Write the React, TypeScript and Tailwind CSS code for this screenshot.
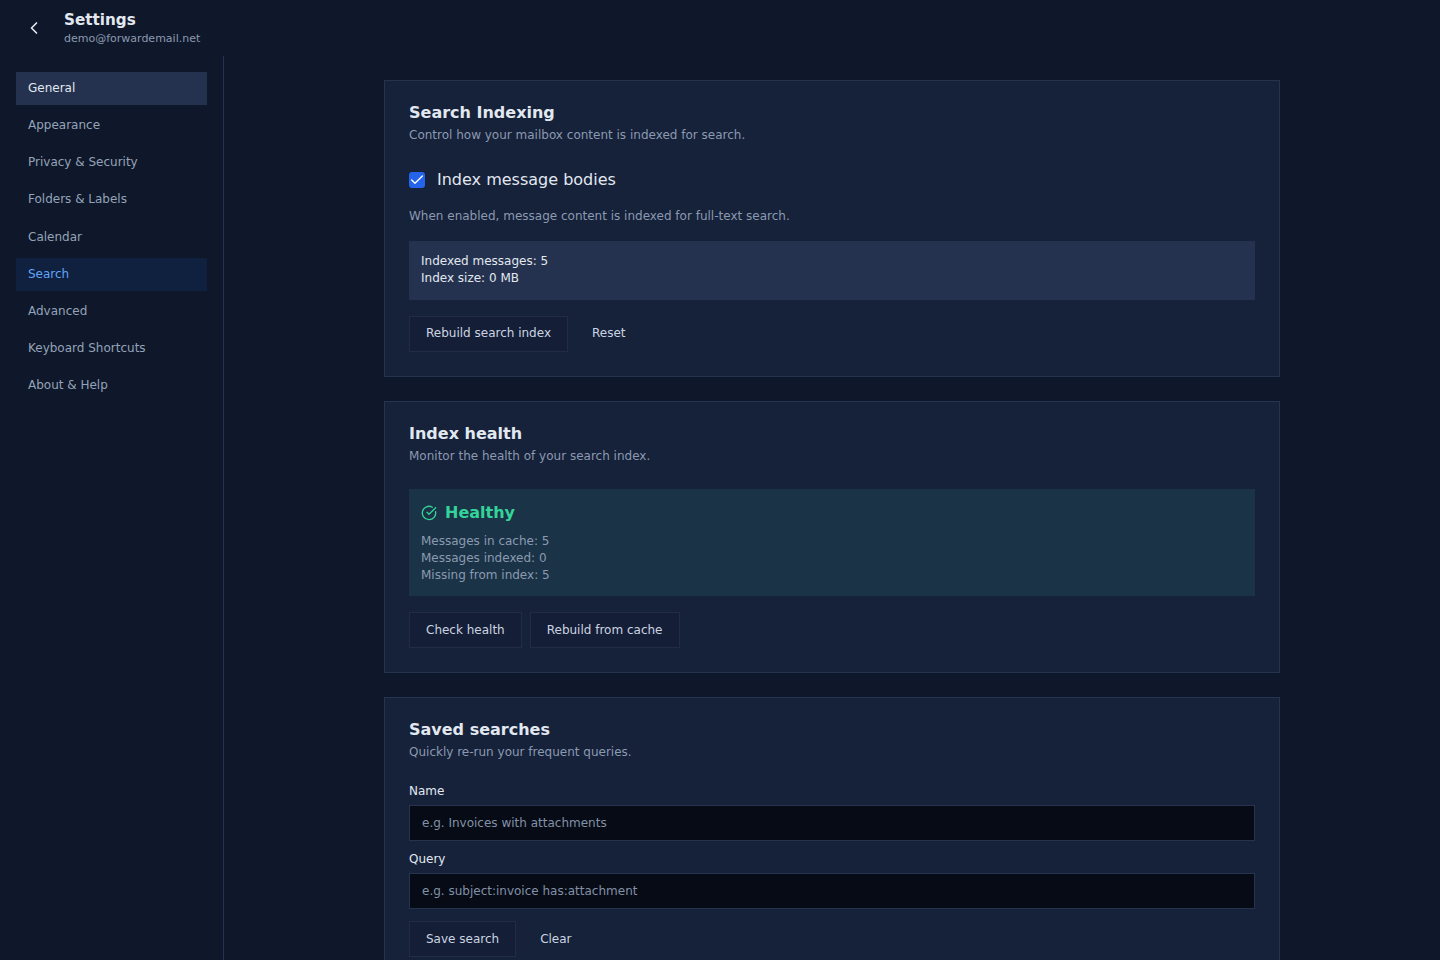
import React from 'react';
import { ChevronLeft, Check, CircleCheckBig } from 'lucide-react';

const navItems = [
  'General',
  'Appearance',
  'Privacy & Security',
  'Folders & Labels',
  'Calendar',
  'Search',
  'Advanced',
  'Keyboard Shortcuts',
  'About & Help',
];

const Button: React.FC<{ label: string; outlined?: boolean; className?: string }> = ({
  label,
  outlined = true,
  className = '',
}) => (
  <button
    className={`h-9 px-4 text-[12px] text-[#cbd5e1] ${
      outlined ? 'border bg-[#151e37] border-[#202c48]' : 'bg-transparent'
    } ${className}`}
  >
    {label}
  </button>
);

const Card: React.FC<{ title: string; description: string; children: React.ReactNode }> = ({
  title,
  description,
  children,
}) => (
  <section className="border border-[#26334f] bg-[#16213a] px-6 pt-[22px] pb-6">
    <h2 className="text-[16px] leading-[20px] font-bold text-[#e2e8f0]">{title}</h2>
    <p className="mt-[2px] text-[12px] leading-[20px] text-[#8b9ab0]">{description}</p>
    {children}
  </section>
);

export default function App() {
  return (
    <div className="h-[960px] overflow-hidden bg-[#0f172a] font-['DejaVu_Sans',sans-serif]">
      {/* Header */}
      <header className="flex h-14 items-center pl-6">
        <ChevronLeft className="h-5 w-5 text-[#e2e8f0]" strokeWidth={2} />
        <div className="ml-[20px]">
          <div className="text-[15.2px] leading-[20px] font-bold text-[#e2e8f0]">Settings</div>
          <div className="mt-[1px] text-[11px] leading-[16px] text-[#8b9ab0]">demo@forwardemail.net</div>
        </div>
      </header>

      <div className="flex h-[904px]">
        {/* Sidebar */}
        <nav className="flex w-[224px] shrink-0 flex-col gap-1 border-r border-[#26334f] pt-[15.8px] pl-4 pr-4">
          {navItems.map((item) => (
            <div
              key={item}
              className={`px-3 py-2 text-[12px] leading-[17.2px] ${
                item === 'General'
                  ? 'bg-[#24324f] text-[#e2e8f0]'
                  : item === 'Search'
                    ? 'bg-[#10203f] text-[#60a5fa]'
                    : 'text-[#94a3b8]'
              }`}
            >
              {item}
            </div>
          ))}
        </nav>

        {/* Main */}
        <main className="flex flex-1 flex-col items-center pt-6">
          <div className="flex w-[896px] flex-col gap-6">
            <Card title="Search Indexing" description="Control how your mailbox content is indexed for search.">
              <div className="mt-[25px] flex h-5 items-center gap-3">
                <span className="flex h-4 w-4 items-center justify-center rounded-[3px] bg-[#2563eb]">
                  <Check className="h-4 w-4 text-white" strokeWidth={2} />
                </span>
                <span className="text-[16px] text-[#e2e8f0]">Index message bodies</span>
              </div>
              <p className="mt-[16px] text-[12px] leading-[20px] text-[#8b9ab0]">
                When enabled, message content is indexed for full-text search.
              </p>
              <div className="mt-[15px] bg-[#24324f] px-3 pt-3 pb-[13px] text-[12px] leading-[17px] text-[#e2e8f0]">
                <div>Indexed messages: 5</div>
                <div>Index size: 0 MB</div>
              </div>
              <div className="mt-4 flex gap-2">
                <Button label="Rebuild search index" className="pb-[2px]" />
                <Button label="Reset" outlined={false} className="pb-[2px]" />
              </div>
            </Card>

            <Card title="Index health" description="Monitor the health of your search index.">
              <div className="mt-[23px] bg-[#1a3347] px-3 pt-[14px] pb-3">
                <div className="flex h-5 items-center gap-2">
                  <CircleCheckBig className="h-4 w-4 text-[#34d399]" strokeWidth={2} />
                  <span className="text-[16px] font-bold text-[#34d399]">Healthy</span>
                </div>
                <div className="mt-[10px] text-[12px] leading-[17px] text-[#8b9ab0]">
                  <div>Messages in cache: 5</div>
                  <div>Messages indexed: 0</div>
                  <div>Missing from index: 5</div>
                </div>
              </div>
              <div className="mt-4 flex gap-2">
                <Button label="Check health" />
                <Button label="Rebuild from cache" />
              </div>
            </Card>

            <Card title="Saved searches" description="Quickly re-run your frequent queries.">
              <label className="mt-[21px] block text-[12px] leading-[17px] text-[#e2e8f0]">Name</label>
              <input
                placeholder="e.g. Invoices with attachments"
                className="mt-[5px] block h-9 w-full border border-[#26334f] bg-[#060b16] px-3 text-[12px] text-[#e2e8f0] outline-none placeholder:text-[#8391a7]"
              />
              <label className="mt-[10px] block text-[12px] leading-[17px] text-[#e2e8f0]">Query</label>
              <input
                placeholder="e.g. subject:invoice has:attachment"
                className="mt-[5px] block h-9 w-full border border-[#26334f] bg-[#060b16] px-3 text-[12px] text-[#e2e8f0] outline-none placeholder:text-[#8391a7]"
              />
              <div className="mt-3 flex gap-2">
                <Button label="Save search" />
                <Button label="Clear" outlined={false} />
              </div>
            </Card>
          </div>
        </main>
      </div>
    </div>
  );
}
